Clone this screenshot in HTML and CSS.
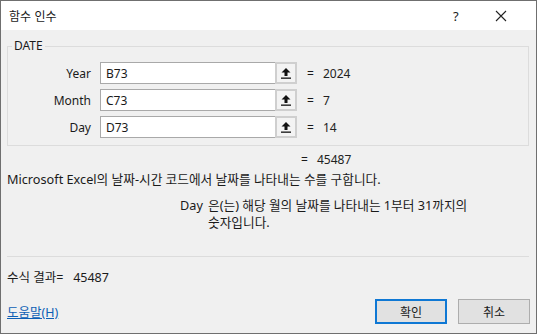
FILE: index.html
```html
<!DOCTYPE html>
<html lang="ko">
<head>
    <meta charset="UTF-8">
    <title>함수 인수</title>
    <link rel="stylesheet" href="styles.css">
</head>
<body>
    <div class="window">
        <div class="titlebar">
            <span class="title">함수 인수</span>
            <span class="help">?</span>
            <span class="close">
                <svg width="12" height="12" viewBox="0 0 12 12"><path d="M1 1 L11 11 M11 1 L1 11" stroke="#222" stroke-width="1.1" fill="none"/></svg>
            </span>
        </div>

        <div class="body">
            <fieldset class="group">
                <legend>DATE</legend>

                <div class="row">
                    <span class="label">Year</span>
                    <div class="ref">
                        <span class="ref-text">B73</span>
                        <span class="ref-btn">
                            <svg width="10" height="11" viewBox="0 0 10 11"><path d="M5 0 L9.5 4.5 L6.5 4.5 L6.5 8 L3.5 8 L3.5 4.5 L0.5 4.5 Z" fill="#111"/><rect x="0" y="9.5" width="10" height="1.3" fill="#111"/></svg>
                        </span>
                    </div>
                    <span class="eq">=</span>
                    <span class="val">2024</span>
                </div>

                <div class="row">
                    <span class="label">Month</span>
                    <div class="ref">
                        <span class="ref-text">C73</span>
                        <span class="ref-btn">
                            <svg width="10" height="11" viewBox="0 0 10 11"><path d="M5 0 L9.5 4.5 L6.5 4.5 L6.5 8 L3.5 8 L3.5 4.5 L0.5 4.5 Z" fill="#111"/><rect x="0" y="9.5" width="10" height="1.3" fill="#111"/></svg>
                        </span>
                    </div>
                    <span class="eq">=</span>
                    <span class="val">7</span>
                </div>

                <div class="row">
                    <span class="label">Day</span>
                    <div class="ref">
                        <span class="ref-text">D73</span>
                        <span class="ref-btn">
                            <svg width="10" height="11" viewBox="0 0 10 11"><path d="M5 0 L9.5 4.5 L6.5 4.5 L6.5 8 L3.5 8 L3.5 4.5 L0.5 4.5 Z" fill="#111"/><rect x="0" y="9.5" width="10" height="1.3" fill="#111"/></svg>
                        </span>
                    </div>
                    <span class="eq">=</span>
                    <span class="val">14</span>
                </div>
            </fieldset>

            <div class="total">
                <span class="eq">=</span>
                <span class="val">45487</span>
            </div>

            <div class="desc">Microsoft Excel의 날짜-시간 코드에서 날짜를 나타내는 수를 구합니다.</div>

            <div class="argdesc">
                <span class="argname">Day</span>
                <span class="argtext">은(는) 해당 월의 날짜를 나타내는 1부터 31까지의<br>숫자입니다.</span>
            </div>

            <div class="sep"></div>

            <div class="result">수식 결과=&nbsp;&nbsp; 45487</div>

            <div class="footer">
                <a href="#" class="helplink">도움말(H)</a>
                <div class="buttons">
                    <button class="btn ok">확인</button>
                    <button class="btn">취소</button>
                </div>
            </div>
        </div>
    </div>
</body>
</html>
```

FILE: styles.css
```css
html, body {
    margin: 0;
    padding: 0;
}

body {
    font-family: "Noto Sans", "Noto Sans CJK KR", sans-serif;
    font-size: 12px;
    color: #1a1a1a;
}

.window {
    width: 537px;
    height: 334px;
    box-sizing: border-box;
    border: 1px solid #6f6f6f;
    background-color: #f0f0f0;
    display: flex;
    flex-direction: column;
}

.titlebar {
    height: 29px;
    background-color: #fff;
    display: flex;
    align-items: center;
    padding-left: 8px;
    flex-shrink: 0;
}

.title {
    flex: 1;
    font-family: "Noto Sans CJK KR", sans-serif;
    font-size: 12px;
}

.help {
    width: 12px;
    margin-right: 30px;
    font-size: 13px;
}

.close {
    width: 12px;
    height: 12px;
    margin-right: 29px;
    display: flex;
}

.body {
    flex: 1;
    padding: 8px 7px 0 6px;
    display: flex;
    flex-direction: column;
}

.group {
    margin: 0;
    padding: 8px 0 7px 0;
    border: 1px solid #dcdcdc;
    min-width: 0;
}

.group legend {
    padding: 0 2px;
    margin-left: 4px;
    line-height: 16px;
}

.row {
    display: flex;
    align-items: center;
    height: 22px;
    margin-bottom: 5px;
}

.row:last-child {
    margin-bottom: 0;
}

.label {
    width: 83px;
    text-align: right;
    margin-right: 9px;
}

.ref {
    width: 197px;
    height: 22px;
    box-sizing: border-box;
    border: 1px solid #a9a9a9;
    background-color: #fff;
    display: flex;
    align-items: center;
}

.ref-text {
    flex: 1;
    padding-left: 5px;
}

.ref-btn {
    width: 22px;
    height: 22px;
    box-sizing: border-box;
    margin: -1px -1px -1px 0;
    border: 2px solid #cfcfcf;
    background-color: #f3f3f3;
    display: flex;
    align-items: center;
    justify-content: center;
}

.eq {
    margin-left: 10px;
    width: 16px;
}

.val {
    color: #222;
}

.total {
    display: flex;
    padding-left: 294px;
    margin-top: 6px;
    line-height: 16px;
}

.total .eq {
    margin-left: 0;
}

.desc {
    margin-top: 3px;
    line-height: 16px;
    font-size: 12.7px;
}

.argdesc {
    display: flex;
    margin-top: 10px;
    line-height: 17px;
    padding-left: 173px;
    font-size: 12.7px;
}

.argname {
    width: 28px;
}

.sep {
    height: 1px;
    background-color: #dcdcdc;
    margin-top: 25px;
}

.result {
    margin-top: 13px;
    line-height: 16px;
    font-size: 12.5px;
}

.footer {
    display: flex;
    align-items: center;
    justify-content: space-between;
    margin-top: 13px;
}

.helplink {
    color: #0d5fb5;
    text-decoration: underline;
    font-size: 12.5px;
}

.buttons {
    display: flex;
    gap: 11px;
    margin-right: -1px;
}

.btn {
    width: 72px;
    height: 25px;
    font-family: "Noto Sans CJK KR", sans-serif;
    font-size: 12px;
    color: #1a1a1a;
    background-color: #e1e1e1;
    border: 1px solid #adadad;
    padding: 0;
}

.btn.ok {
    border: 2px solid #0f78d4;
}
```
